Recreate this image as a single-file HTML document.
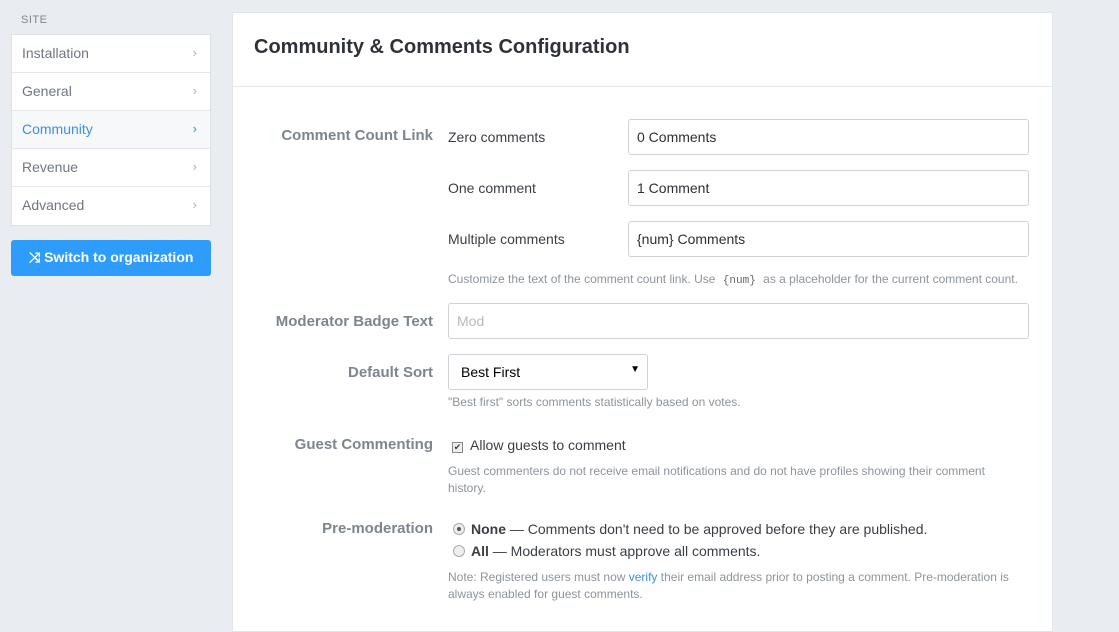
<!DOCTYPE html>
<html><head><style>
*{box-sizing:border-box;margin:0;padding:0}
body{width:1119px;height:618px;overflow:hidden;background:#e9edf2;font-family:"Liberation Sans",sans-serif;position:relative;color:#333}
.a{position:absolute;white-space:nowrap}
.site{left:21px;top:14px;font-size:11px;color:#7d8590;letter-spacing:.5px}
.nav{left:11px;top:34px;width:200px;background:#fff;border:1px solid #dde1e6}
.nav div{height:38px;border-bottom:1px solid #e3e6ea;font-size:14px;color:#707780;padding:10px 10px;position:relative}
.nav div:last-child{border-bottom:none}
.nav div span{position:absolute;right:13px;top:10px;color:#b0b5bb;font-size:13px}
.nav .act{background:#f7f8fa;color:#3d8fe0}
.nav .act span{color:#3d8fe0}
.btn{left:11px;top:240px;width:200px;height:36px;background:#2d9cfb;border-radius:3px;color:#fff;font-size:14px;font-weight:bold;padding:9px 0 0 18px}
.card{left:232px;top:12px;width:821px;height:620px;background:#fff;border:1px solid #e1e4e8}
.hdr{left:232px;top:86px;width:821px;border-top:1px solid #e6e8eb}
h1{position:absolute;left:254px;top:36px;font-size:20px;font-weight:bold;color:#2f3338}
.lbl{font-size:15px;font-weight:bold;color:#7d858e;text-align:right;right:686px}
.sub{left:448px;font-size:14px;color:#3a3f45}
.inp{position:absolute;border:1px solid #cfd3d8;border-radius:3px;height:36px;background:#fff;font-size:14px;padding:9px 8px;color:#2c3035}
.help{left:448px;font-size:12px;color:#8d949b;line-height:17px}
code{font-family:"Liberation Mono",monospace;font-size:11px;color:#666;margin:0 4px}
.radio{display:inline-block;width:12px;height:12px;border:1px solid #aaa;border-radius:50%;background:#eee;vertical-align:-1px;margin-right:6px;position:relative}
.radio.on::after{content:"";position:absolute;left:3px;top:3px;width:4px;height:4px;border-radius:50%;background:#555}
</style></head><body>
<div class="a site">SITE</div>
<div class="a nav">
<div>Installation<span>›</span></div>
<div>General<span>›</span></div>
<div class="act">Community<span>›</span></div>
<div>Revenue<span>›</span></div>
<div>Advanced<span>›</span></div>
</div>
<div class="a btn">⤨ Switch to organization</div>
<div class="a card"></div>
<div class="a hdr"></div>
<h1>Community &amp; Comments Configuration</h1>

<div class="a lbl" style="top:127px">Comment Count Link</div>
<div class="a sub" style="top:129px">Zero comments</div>
<div class="inp" style="left:628px;top:119px;width:401px">0 Comments</div>
<div class="a sub" style="top:180px">One comment</div>
<div class="inp" style="left:628px;top:170px;width:401px">1 Comment</div>
<div class="a sub" style="top:231px">Multiple comments</div>
<div class="inp" style="left:628px;top:221px;width:401px">{num} Comments</div>
<div class="a help" style="top:271px">Customize the text of the comment count link. Use <code>{num}</code> as a placeholder for the current comment count.</div>

<div class="a lbl" style="top:313px">Moderator Badge Text</div>
<div class="inp" style="left:448px;top:303px;width:581px;color:#b5bac0">Mod</div>

<div class="a lbl" style="top:364px">Default Sort</div>
<div class="inp" style="left:448px;top:354px;width:200px;padding-left:12px;color:#000">Best First<span style="position:absolute;right:7px;top:9px;font-size:10px">▼</span></div>
<div class="a help" style="top:394px">"Best first" sorts comments statistically based on votes.</div>

<div class="a lbl" style="top:436px">Guest Commenting</div>
<div class="a sub" style="top:437px;left:452px"><span style="display:inline-block;width:11px;height:11px;border:1px solid #888;background:#eee;font-size:9px;line-height:9px;text-align:center;vertical-align:0;margin-right:7px">✔</span>Allow guests to comment</div>
<div class="a help" style="top:463px">Guest commenters do not receive email notifications and do not have profiles showing their comment<br>history.</div>

<div class="a lbl" style="top:520px">Pre-moderation</div>
<div class="a sub" style="top:521px;left:453px"><span class="radio on"></span><b>None</b> — Comments don't need to be approved before they are published.</div>
<div class="a sub" style="top:543px;left:453px"><span class="radio"></span><b>All</b> — Moderators must approve all comments.</div>
<div class="a help" style="top:569px">Note: Registered users must now <span style="color:#3d8fe0">verify</span> their email address prior to posting a comment. Pre-moderation is<br>always enabled for guest comments.</div>
</body></html>
